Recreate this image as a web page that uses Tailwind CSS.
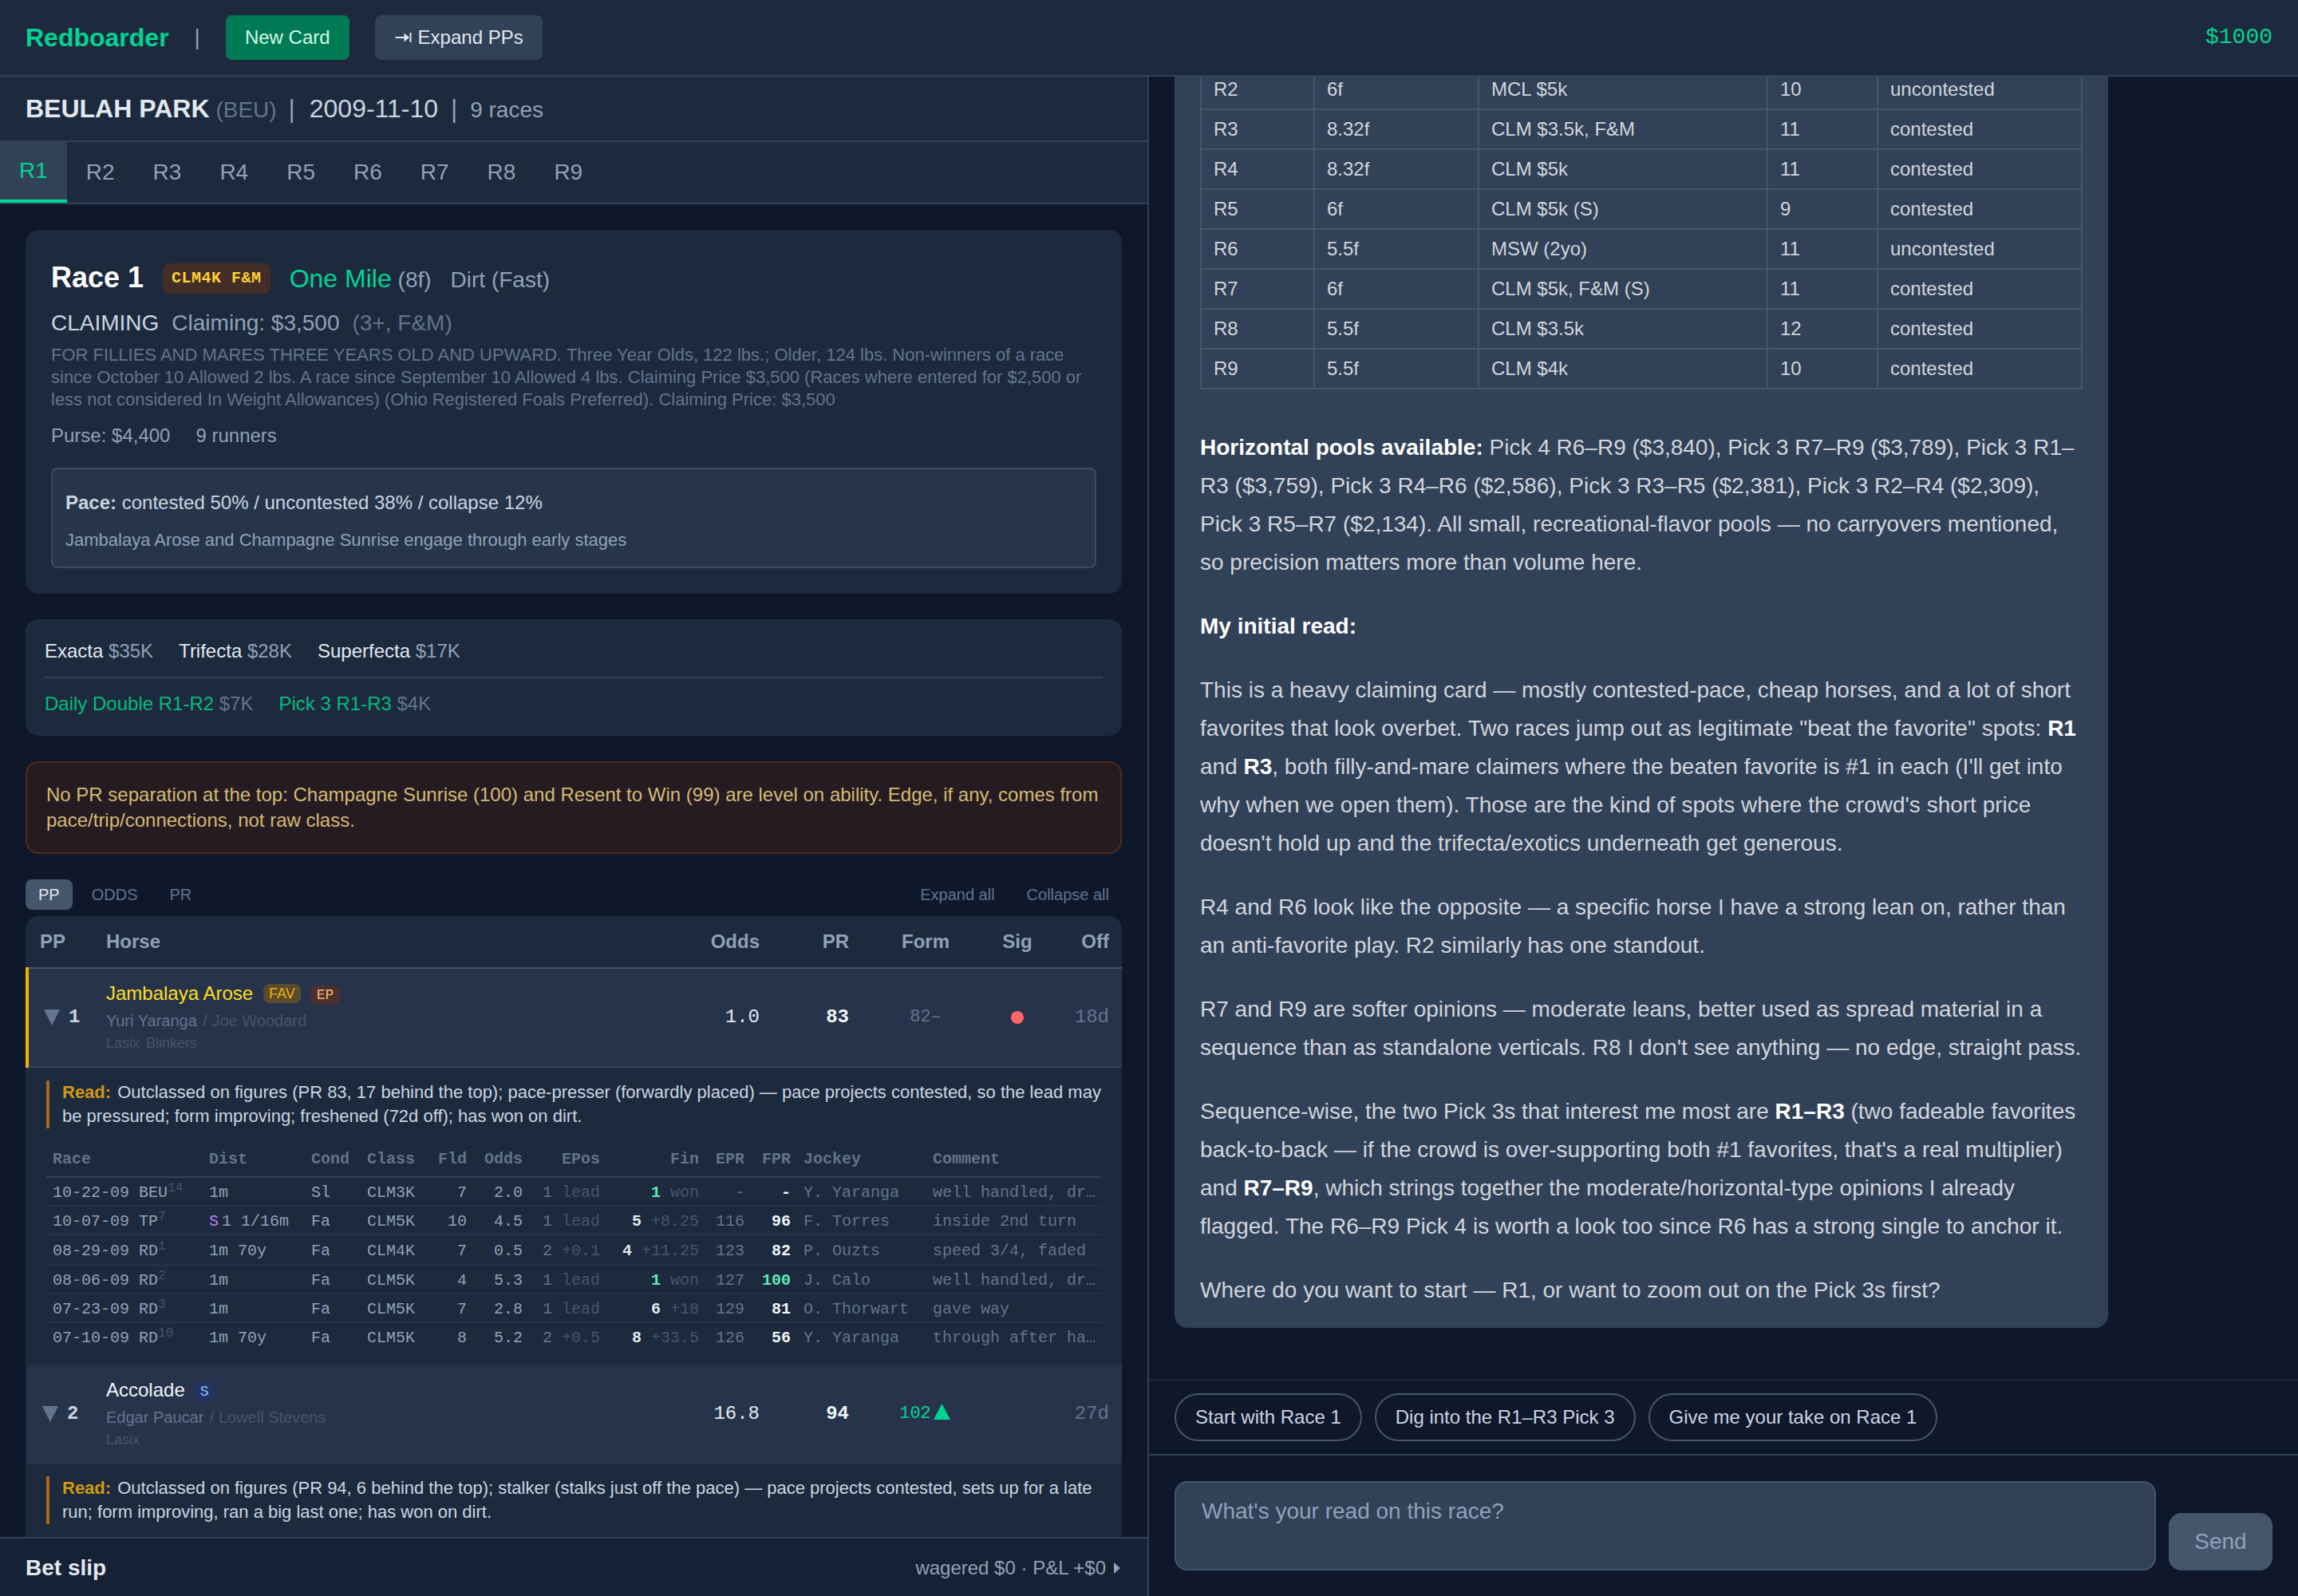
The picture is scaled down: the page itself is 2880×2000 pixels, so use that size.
<!DOCTYPE html>
<html lang="en" class="text-[32px]">
<head>
  <meta charset="UTF-8">
  <meta name="viewport" content="width=device-width, initial-scale=1.0">
  <title>Redboarder</title>
  <script src="https://cdn.jsdelivr.net/npm/@tailwindcss/browser@4"></script>
</head>
<body class="h-screen flex flex-col overflow-hidden bg-slate-900 text-slate-200 font-['Liberation_Sans',Arial,sans-serif]">

  <!-- Top bar -->
  <header class="h-[96px] shrink-0 flex items-center gap-4 px-4 bg-slate-800 border-b-2 border-slate-700">
    <h1 class="text-base font-bold text-emerald-400">Redboarder</h1>
    <span class="text-sm text-slate-400">|</span>
    <button class="px-3 py-1.5 text-xs rounded-[8px] bg-emerald-700 text-emerald-100">New Card</button>
    <button class="px-3 py-1.5 text-xs rounded-[8px] bg-slate-700 text-slate-200 flex items-center">
      <svg class="w-[22px] h-[14px] mr-[8px]" viewBox="0 0 22 14" fill="none" stroke="currentColor" stroke-width="2">
        <path d="M1.500 7h12M20.500 1v12"></path>
        <path d="M12.500 1.500l6.500 5.500-6.500 5.500z" fill="currentColor" stroke="none"></path>
      </svg>
      Expand PPs
    </button>
    <span class="ml-auto text-sm text-emerald-400 font-['Liberation_Mono',monospace]">$1000</span>
  </header>

  <main class="flex-1 min-h-0 flex">

    <!-- Race card -->
    <section class="w-1/2 flex flex-col border-r-2 border-slate-700">
      <div class="h-[82px] shrink-0 px-4 py-2 bg-slate-800 border-b-2 border-slate-700 text-base whitespace-nowrap">
        <span class="font-bold">BEULAH PARK</span>
        <span class="text-sm text-slate-500 -ml-[1px]">(BEU)</span>
        <span class="ml-[6px] mr-[9px] text-slate-400">|</span>
        <span class="text-slate-300">2009-11-10</span>
        <span class="ml-[7px] mr-[7px] text-slate-400">|</span>
        <span class="text-sm text-slate-400">9 races</span>
      </div>

      <nav class="h-[78px] shrink-0 flex bg-slate-800 border-b-2 border-slate-700 text-sm text-slate-400">
        <button class="px-3 py-2 bg-slate-700 text-emerald-400 border-b-4 border-emerald-400">R1</button>
        <button class="px-3 py-2">R2</button>
        <button class="px-3 py-2">R3</button>
        <button class="px-3 py-2">R4</button>
        <button class="px-3 py-2">R5</button>
        <button class="px-3 py-2">R6</button>
        <button class="px-3 py-2">R7</button>
        <button class="px-3 py-2">R8</button>
        <button class="px-3 py-2">R9</button>
      </nav>

      <div class="flex-1 min-h-0 overflow-hidden p-4">

        <!-- Race conditions -->
        <div class="h-[456px] p-4 rounded-lg bg-slate-800">
          <div class="flex items-baseline gap-3">
            <h2 class="text-lg/[56px] font-bold text-white">Race 1</h2>
            <span class="self-center mt-[2px] px-[11px] py-1 text-[20px]/[22px] font-bold tracking-wide rounded-[8px] bg-[#432d27] text-amber-300 font-['Liberation_Mono',monospace]">CLM4K F&amp;M</span>
            <span class="text-base text-emerald-400">One Mile <span class="text-sm text-slate-400 -ml-[1px]">(8f)</span></span>
            <span class="text-sm text-slate-400">Dirt (Fast)</span>
          </div>
          <div class="mt-[9px] flex gap-2 text-sm">
            <span class="text-slate-300">CLAIMING</span>
            <span class="text-slate-400">Claiming: $3,500</span>
            <span class="text-slate-500">(3+, F&amp;M)</span>
          </div>
          <p class="mt-[6px] text-[22px]/[28px] text-slate-500">FOR FILLIES AND MARES THREE YEARS OLD AND UPWARD. Three Year Olds, 122 lbs.; Older, 124 lbs. Non-winners of a race since October 10 Allowed 2 lbs. A race since September 10 Allowed 4 lbs. Claiming Price $3,500 (Races where entered for $2,500 or less not considered In Weight Allowances) (Ohio Registered Foals Preferred). Claiming Price: $3,500</p>
          <div class="mt-[15px] flex gap-4 text-xs text-slate-400">
            <span>Purse: $4,400</span>
            <span>9 runners</span>
          </div>
          <div class="mt-[24px] h-[126px] px-2 pt-[22px] rounded-[8px] border-2 border-slate-600/70 bg-slate-700/50">
            <p class="text-[24px]/[40px] text-slate-300"><b>Pace:</b> contested 50% / uncontested 38% / collapse 12%</p>
            <p class="mt-[9px] text-[22px]/[36px] text-slate-400">Jambalaya Arose and Champagne Sunrise engage through early stages</p>
          </div>
        </div>

        <!-- Pools -->
        <div class="mt-4 p-3 rounded-lg bg-slate-800 text-xs">
          <div class="flex gap-4 pb-2 border-b-2 border-slate-700">
            <span>Exacta <span class="text-slate-400">$35K</span></span>
            <span>Trifecta <span class="text-slate-400">$28K</span></span>
            <span>Superfecta <span class="text-slate-400">$17K</span></span>
          </div>
          <div class="flex gap-4 pt-2 text-emerald-500">
            <span>Daily Double R1-R2 <span class="text-slate-500">$7K</span></span>
            <span>Pick 3 R1-R3 <span class="text-slate-500">$4K</span></span>
          </div>
        </div>

        <div class="mt-4 p-3 rounded-lg border-2 border-[#532a1a] bg-[#271b22] text-xs text-[#d1bb74]">No PR separation at the top: Champagne Sunrise (100) and Resent to Win (99) are level on ability. Edge, if any, comes from pace/trip/connections, not raw class.</div>

        <!-- View switch -->
        <div class="mt-4 flex gap-1 text-[20px]/[30px] text-slate-500">
          <button class="px-2 py-[4px] rounded-[8px] bg-slate-600 text-slate-200">PP</button>
          <button class="px-2 py-[4px]">ODDS</button>
          <button class="px-2 py-[4px]">PR</button>
          <button class="ml-auto px-2 py-[4px]">Expand all</button>
          <button class="px-2 py-[4px]">Collapse all</button>
        </div>

        <!-- Runners -->
        <div class="mt-1 rounded-t-lg bg-slate-800 overflow-hidden">
          <div class="h-[66px] grid grid-cols-[85px_auto_112px_112px_160px_70px_96px] items-center border-b-2 border-slate-600 text-xs font-bold text-slate-400">
            <span class="pl-[18px]">PP</span>
            <span class="pl-2">Horse</span>
            <span class="pr-2 text-right">Odds</span>
            <span class="pr-2 text-right">PR</span>
            <span class="text-center">Form</span>
            <span class="text-center">Sig</span>
            <span class="pr-2 text-right">Off</span>
          </div>

          <div class="relative h-[124px] grid grid-cols-[85px_auto_112px_112px_160px_70px_96px] items-center bg-[#27334a] border-b-2 border-slate-700 text-xs font-['Liberation_Mono',monospace]">
            <i class="absolute left-0 -top-[2px] -bottom-[2px] w-[4px] bg-[#f0b100]"></i>
            <span class="pl-[23px] flex items-center gap-[11px] font-bold text-slate-300">
              <svg class="w-[20px] h-[20px]" viewBox="0 0 20 20"><path d="M0 0h20L10 20z" fill="#62748e"></path></svg>1
            </span>
            <div class="pl-2 font-['Liberation_Sans',Arial,sans-serif]">
              <div class="h-[35px] flex items-start">
                <span class="text-xs text-yellow-300">Jambalaya Arose</span>
                <span class="ml-[13px] mt-[4px] px-[7px] text-[18px]/[24px] rounded-[8px] bg-[#5a4a2e] text-[#f0b100]">FAV</span>
                <span class="ml-[12px] mt-[6px] px-1 text-[18px]/[24px] rounded-[8px] bg-[#4b2f31] text-orange-300 font-['Liberation_Mono',monospace]">EP</span>
              </div>
              <div class="text-[20px]/[30px] text-slate-500">Yuri Yaranga <span class="text-slate-600 ml-[2px]">/ Joe Woodard</span></div>
              <div class="text-[18px]/[27px] text-slate-600">Lasix <span class="ml-[3px]">Blinkers</span></div>
            </div>
            <span class="pr-2 text-right">1.0</span>
            <span class="pr-2 text-right font-bold text-slate-100">83</span>
            <span class="text-center text-[22px] text-slate-500">82–</span>
            <span class="w-[16px] h-[16px] rounded-full bg-red-400 justify-self-center"></span>
            <span class="pr-2 text-right text-slate-500">18d</span>
          </div>

          <div class="h-[372px] px-[26px] pt-2">
            <p class="h-[60px] -mr-2 border-l-4 border-[#a16c14] pl-2 text-[22px]/[30px] text-slate-300"><b class="text-[#d09a0f] mr-[2px]">Read:</b> Outclassed on figures (PR 83, 17 behind the top); pace-presser (forwardly placed) — pace projects contested, so the lead may be pressured; form improving; freshened (72d off); has won on dirt.</p>

            <!-- Past performances -->
            <table class="mt-[24px] w-full table-fixed border-separate border-spacing-0 text-[20px]/[26px] text-left whitespace-nowrap text-slate-400 font-['Liberation_Mono',monospace] [&_th]:px-1 [&_th]:pb-[7px] [&_th]:text-slate-500 [&_th]:border-b-2 [&_th]:border-slate-700 [&_td]:px-1 [&_td]:pt-[3px] [&_td]:border-b-2 [&_td]:border-slate-700/40 [&_sup]:text-[16px] [&_sup]:text-slate-600 [&_i]:not-italic [&_i]:text-slate-600 [&_sup]:top-[-7px]">
              <colgroup>
                <col class="w-[196px]"><col class="w-[128px]"><col class="w-[70px]"><col class="w-[76px]"><col class="w-[65px]"><col class="w-[70px]"><col class="w-[97px]"><col class="w-[124px]"><col class="w-[57px]"><col class="w-[58px]"><col class="w-[162px]"><col>
              </colgroup>
              <thead>
                <tr class="h-[38px]">
                  <th>Race</th><th>Dist</th><th>Cond</th><th>Class</th><th class="text-right">Fld</th><th class="text-right">Odds</th><th class="text-right">EPos</th><th class="text-right">Fin</th><th class="text-right">EPR</th><th class="text-right">FPR</th><th>Jockey</th><th>Comment</th>
                </tr>
              </thead>
              <tbody>
                <tr class="h-[36px]">
                  <td>10-22-09 BEU<sup>14</sup></td><td>1m</td><td>Sl</td><td>CLM3K</td><td class="text-right">7</td><td class="text-right">2.0</td>
                  <td class="text-right text-slate-500">1 <i>lead</i></td><td class="text-right"><b class="text-emerald-300">1</b> <i>won</i></td><td class="text-right text-slate-500">-</td><td class="text-right font-bold text-slate-100">-</td>
                  <td class="text-slate-500">Y. Yaranga</td><td class="text-slate-500">well handled, dr…</td>
                </tr>
                <tr class="h-[36px]">
                  <td>10-07-09 TP<sup>7</sup></td><td><span class="text-purple-400 mr-[4px]">S</span>1 1/16m</td><td>Fa</td><td>CLM5K</td><td class="text-right">10</td><td class="text-right">4.5</td>
                  <td class="text-right text-slate-500">1 <i>lead</i></td><td class="text-right"><b class="text-slate-200">5</b> <i>+8.25</i></td><td class="text-right text-slate-500">116</td><td class="text-right font-bold text-slate-100">96</td>
                  <td class="text-slate-500">F. Torres</td><td class="text-slate-500">inside 2nd turn</td>
                </tr>
                <tr class="h-[38px]">
                  <td>08-29-09 RD<sup>1</sup></td><td>1m 70y</td><td>Fa</td><td>CLM4K</td><td class="text-right">7</td><td class="text-right">0.5</td>
                  <td class="text-right text-slate-500">2 <i>+0.1</i></td><td class="text-right"><b class="text-slate-200">4</b> <i>+11.25</i></td><td class="text-right text-slate-500">123</td><td class="text-right font-bold text-slate-100">82</td>
                  <td class="text-slate-500">P. Ouzts</td><td class="text-slate-500">speed 3/4, faded</td>
                </tr>
                <tr class="h-[36px]">
                  <td>08-06-09 RD<sup>2</sup></td><td>1m</td><td>Fa</td><td>CLM5K</td><td class="text-right">4</td><td class="text-right">5.3</td>
                  <td class="text-right text-slate-500">1 <i>lead</i></td><td class="text-right"><b class="text-emerald-300">1</b> <i>won</i></td><td class="text-right text-slate-500">127</td><td class="text-right font-bold text-emerald-300">100</td>
                  <td class="text-slate-500">J. Calo</td><td class="text-slate-500">well handled, dr…</td>
                </tr>
                <tr class="h-[36px]">
                  <td>07-23-09 RD<sup>3</sup></td><td>1m</td><td>Fa</td><td>CLM5K</td><td class="text-right">7</td><td class="text-right">2.8</td>
                  <td class="text-right text-slate-500">1 <i>lead</i></td><td class="text-right"><b class="text-slate-200">6</b> <i>+18</i></td><td class="text-right text-slate-500">129</td><td class="text-right font-bold text-slate-100">81</td>
                  <td class="text-slate-500">O. Thorwart</td><td class="text-slate-500">gave way</td>
                </tr>
                <tr class="h-[36px] [&_td]:border-transparent">
                  <td>07-10-09 RD<sup>10</sup></td><td>1m 70y</td><td>Fa</td><td>CLM5K</td><td class="text-right">8</td><td class="text-right">5.2</td>
                  <td class="text-right text-slate-500">2 <i>+0.5</i></td><td class="text-right"><b class="text-slate-200">8</b> <i>+33.5</i></td><td class="text-right text-slate-500">126</td><td class="text-right font-bold text-slate-100">56</td>
                  <td class="text-slate-500">Y. Yaranga</td><td class="text-slate-500">through after ha…</td>
                </tr>
              </tbody>
            </table>
          </div>

          <div class="h-[124px] ml-[2px] grid grid-cols-[83px_auto_112px_112px_160px_70px_96px] items-center bg-[#27334a] text-xs font-['Liberation_Mono',monospace]">
            <span class="pl-[19px] flex items-center gap-[11px] font-bold text-slate-300">
              <svg class="w-[20px] h-[20px]" viewBox="0 0 20 20"><path d="M0 0h20L10 20z" fill="#62748e"></path></svg>2
            </span>
            <div class="pl-2 font-['Liberation_Sans',Arial,sans-serif]">
              <div class="h-[35px] flex items-start">
                <span class="text-xs text-slate-100">Accolade</span>
                <span class="ml-[12px] mt-[6px] px-[7px] text-[18px]/[24px] rounded-[8px] bg-[#213463] text-blue-300 font-['Liberation_Mono',monospace]">S</span>
              </div>
              <div class="text-[20px]/[30px] text-slate-500">Edgar Paucar <span class="text-slate-600 ml-[2px]">/ Lowell Stevens</span></div>
              <div class="text-[18px]/[27px] text-slate-600">Lasix</div>
            </div>
            <span class="pr-2 text-right">16.8</span>
            <span class="pr-2 text-right font-bold text-slate-100">94</span>
            <span class="flex justify-center items-center gap-[3px] pr-[2px] text-[22px] text-emerald-400">102<svg class="w-[21px] h-[20px] -mt-[5px]" viewBox="0 0 21 20"><path d="M10.500 0L21 20H0z" fill="currentColor"></path></svg></span>
            <span></span>
            <span class="pr-2 text-right text-slate-500">27d</span>
          </div>

          <div class="h-[372px] px-[26px] pt-2">
            <p class="h-[60px] -mr-2 border-l-4 border-[#a16c14] pl-2 text-[22px]/[30px] text-slate-300"><b class="text-[#d09a0f] mr-[2px]">Read:</b> Outclassed on figures (PR 94, 6 behind the top); stalker (stalks just off the pace) — pace projects contested, sets up for a late run; form improving, ran a big last one; has won on dirt.</p>
          </div>
        </div>
      </div>

      <!-- Bet slip -->
      <footer class="h-[74px] shrink-0 flex items-center px-4 pt-[2px] bg-[#172135] border-t-2 border-slate-700">
        <span class="text-sm font-bold">Bet slip</span>
        <span class="ml-auto flex items-center text-xs text-slate-400">wagered $0 · P&amp;L +$0
          <svg class="w-[8px] h-[14px] ml-[10px] mr-[2px]" viewBox="0 0 8 14"><path d="M0 0l8 7-8 7z" fill="currentColor"></path></svg>
        </span>
      </footer>
    </section>

    <!-- Chat -->
    <section class="w-1/2 flex flex-col">
      <div class="flex-1 min-h-0 overflow-hidden flex flex-col justify-end px-4 pb-[64px]">
        <div class="w-[1170px] shrink-0 px-4 pt-3 pb-[23px] rounded-lg bg-slate-700 text-[28px]/[48px] text-gray-300 [&_b]:text-white">
          <table class="w-[1106px] table-fixed border-collapse text-[24px]/[32px] [&_td]:h-[50px] [&_td]:pl-[15px] [&_td]:border-2 [&_td]:border-slate-600">
            <colgroup>
              <col class="w-[142px]"><col class="w-[206px]"><col class="w-[362px]"><col class="w-[138px]"><col class="w-[256px]">
            </colgroup>
            <tr><td>R2</td><td>6f</td><td>MCL $5k</td><td>10</td><td>uncontested</td></tr>
            <tr><td>R3</td><td>8.32f</td><td>CLM $3.5k, F&amp;M</td><td>11</td><td>contested</td></tr>
            <tr><td>R4</td><td>8.32f</td><td>CLM $5k</td><td>11</td><td>contested</td></tr>
            <tr><td>R5</td><td>6f</td><td>CLM $5k (S)</td><td>9</td><td>contested</td></tr>
            <tr><td>R6</td><td>5.5f</td><td>MSW (2yo)</td><td>11</td><td>uncontested</td></tr>
            <tr><td>R7</td><td>6f</td><td>CLM $5k, F&amp;M (S)</td><td>11</td><td>contested</td></tr>
            <tr><td>R8</td><td>5.5f</td><td>CLM $3.5k</td><td>12</td><td>contested</td></tr>
            <tr><td>R9</td><td>5.5f</td><td>CLM $4k</td><td>10</td><td>contested</td></tr>
          </table>
          <p class="mt-[49px]"><b>Horizontal pools available:</b> Pick 4 R6–R9 ($3,840), Pick 3 R7–R9 ($3,789), Pick 3 R1–R3 ($3,759), Pick 3 R4–R6 ($2,586), Pick 3 R3–R5 ($2,381), Pick 3 R2–R4 ($2,309), Pick 3 R5–R7 ($2,134). All small, recreational-flavor pools — no carryovers mentioned, so precision matters more than volume here.</p>
          <p class="mt-4"><b>My initial read:</b></p>
          <p class="mt-4">This is a heavy claiming card — mostly contested-pace, cheap horses, and a lot of short favorites that look overbet. Two races jump out as legitimate "beat the favorite" spots: <b>R1</b> and <b>R3</b>, both filly-and-mare claimers where the beaten favorite is #1 in each (I'll get into why when we open them). Those are the kind of spots where the crowd's short price doesn't hold up and the trifecta/exotics underneath get generous.</p>
          <p class="mt-4">R4 and R6 look like the opposite — a specific horse I have a strong lean on, rather than an anti-favorite play. R2 similarly has one standout.</p>
          <p class="mt-4">R7 and R9 are softer opinions — moderate leans, better used as spread material in a sequence than as standalone verticals. R8 I don't see anything — no edge, straight pass.</p>
          <p class="mt-4">Sequence-wise, the two Pick 3s that interest me most are <b>R1–R3</b> (two fadeable favorites back-to-back — if the crowd is over-supporting both #1 favorites, that's a real multiplier) and <b>R7–R9</b>, which strings together the moderate/horizontal-type opinions I already flagged. The R6–R9 Pick 4 is worth a look too since R6 has a strong single to anchor it.</p>
          <p class="mt-4">Where do you want to start — R1, or want to zoom out on the Pick 3s first?</p>
        </div>
      </div>

      <div class="shrink-0 flex gap-2 px-4 py-2 border-t-2 border-slate-800 text-xs text-slate-300">
        <button class="px-3 py-1.5 rounded-full border-2 border-slate-600">Start with Race 1</button>
        <button class="px-3 py-1.5 rounded-full border-2 border-slate-600">Dig into the R1–R3 Pick 3</button>
        <button class="px-3 py-1.5 rounded-full border-2 border-slate-600">Give me your take on Race 1</button>
      </div>

      <div class="shrink-0 flex items-end gap-2 p-4 border-t-2 border-slate-700 text-sm">
        <textarea class="flex-1 h-[112px] px-4 py-2 rounded-lg border-2 border-slate-600 bg-slate-700 resize-none placeholder:text-slate-400" placeholder="What's your read on this race?"></textarea>
        <button class="w-[130px] py-2 rounded-lg bg-slate-600 text-slate-400">Send</button>
      </div>
    </section>
  </main>
</body>
</html>
